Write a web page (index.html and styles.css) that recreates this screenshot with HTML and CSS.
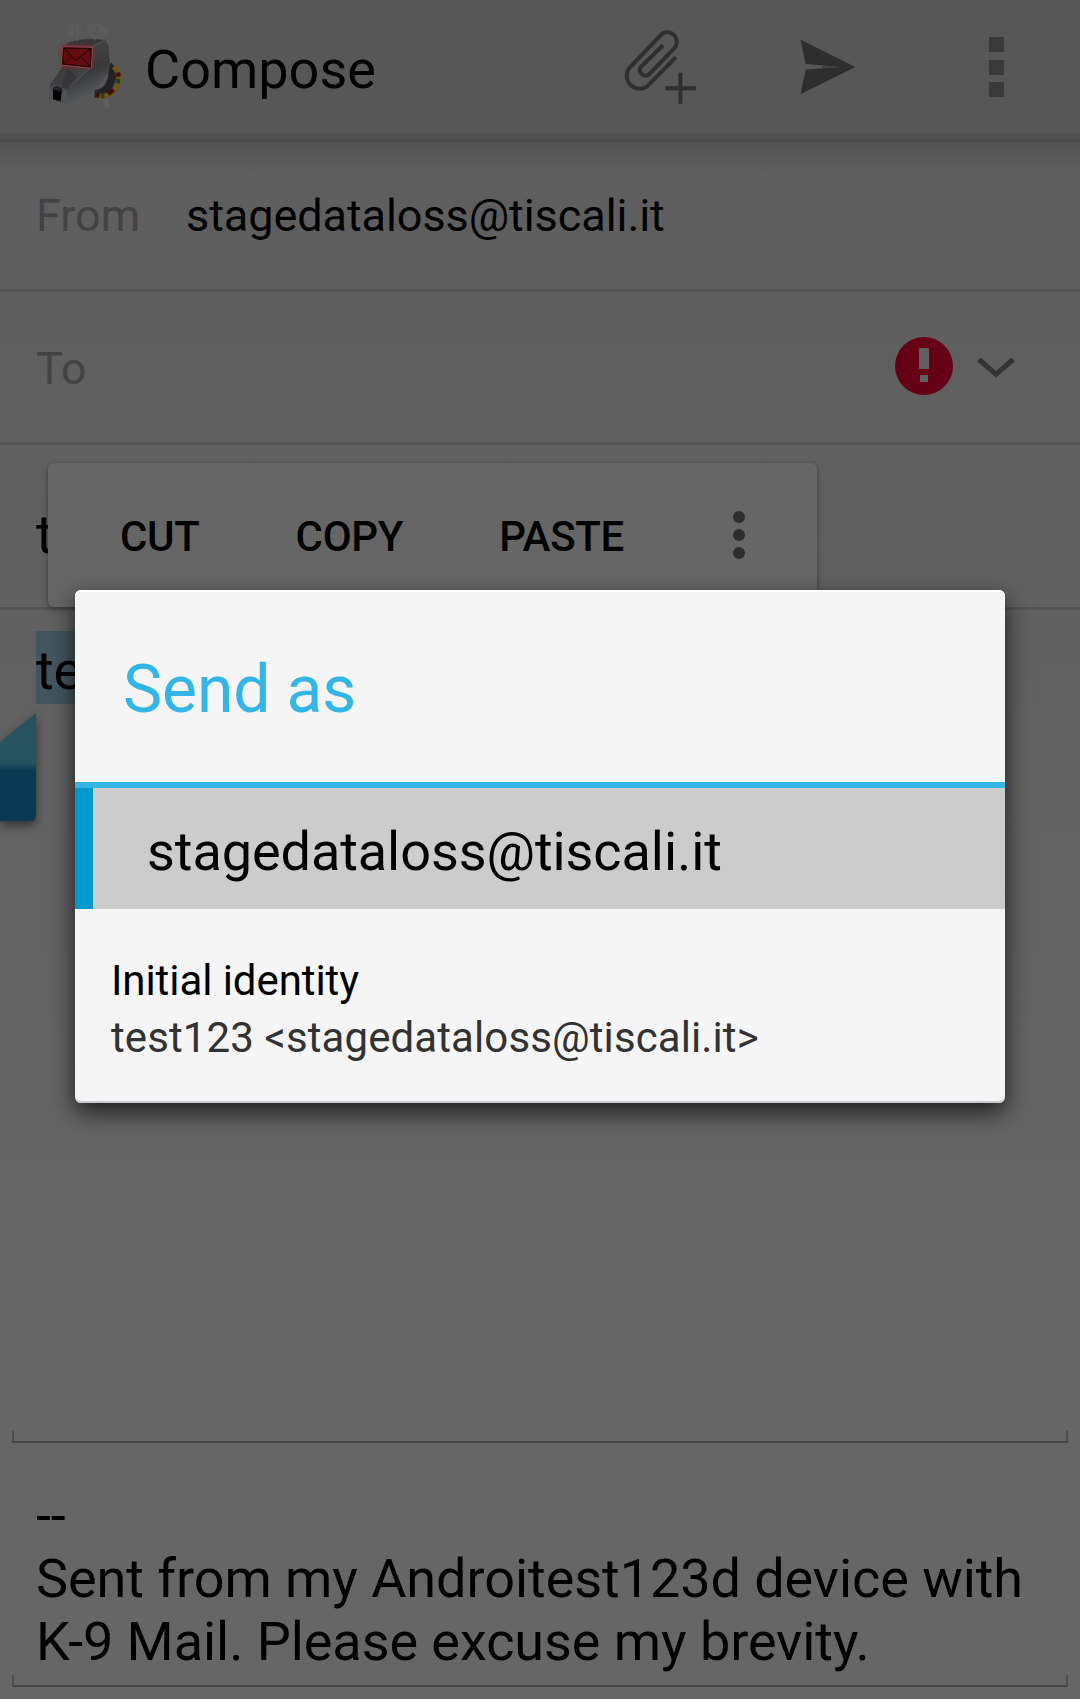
FILE: index.html
```html
<!DOCTYPE html>
<html lang="en">
<head>
<meta charset="utf-8">
<title>Compose</title>
<link rel="stylesheet" href="styles.css">
</head>
<body>
<main class="screen">
  <header class="bar">
    <svg class="logo" viewBox="0 0 270 300" aria-hidden="true">
      <defs>
        <linearGradient id="side" x1="0" y1="0" x2="1" y2="1">
          <stop offset="0" stop-color="#4a4a4b"/><stop offset=".45" stop-color="#363638"/><stop offset="1" stop-color="#404042"/>
        </linearGradient>
        <linearGradient id="snout" x1="0" y1="0" x2="1" y2="1">
          <stop offset="0" stop-color="#39393b"/><stop offset=".5" stop-color="#424244"/><stop offset="1" stop-color="#58595b"/>
        </linearGradient>
        <linearGradient id="top" x1="0" y1="0" x2="0" y2="1">
          <stop offset="0" stop-color="#303032"/><stop offset="1" stop-color="#404042"/>
        </linearGradient>
        <linearGradient id="cheek" x1="0" y1="0" x2=".3" y2="1">
          <stop offset="0" stop-color="#48494b"/><stop offset=".6" stop-color="#38393b"/><stop offset="1" stop-color="#5a5c5e"/>
        </linearGradient>
        <filter id="glow" x="-30%" y="-40%" width="160%" height="180%"><feGaussianBlur stdDeviation="6"/></filter>
      </defs>
      <path d="M190 246l16 4 2 24-8 8-10-14z" fill="#5d5f60"/>
      <path d="M206 152c12 12 15 34 2 58-10 18-26 26-44 26" fill="none" stroke="#222224" stroke-width="24"/>
      <path d="M198 155c10 18 9 38-3 54-9 12-20 19-31 22" fill="none" stroke="#3a3b3d" stroke-width="2"/>
      <path d="M221 155c19 18 20 45 5 66-13 18-32 26-54 22" fill="none" stroke="#6f5519" stroke-width="15"/>
      <path d="M234 172l2 13M221 224L204 237M179 242l-9-1" fill="none" stroke="#4a0f0c" stroke-width="13"/>
      <path d="M235 192l-2 13M193 243l-10 1" fill="none" stroke="#1c4030" stroke-width="12"/>
      <path d="M70 92L88 81 138 71 196 74 205 92 209 150 207 168 112 268 70 264 29 248 32 207 72 150z" fill="url(#side)"/>
      <path d="M70 92L88 81Q135 66 196 74L158 95z" fill="url(#top)" stroke="#585859" stroke-width="2"/>
      <path d="M72 150L155 157 83 225 77 265 29 248 32 207z" fill="url(#snout)"/>
      <path d="M155 157L80 222 77 265 112 268Q170 226 207 168 212 110 196 74L158 95z" fill="url(#cheek)"/>
      <path d="M196 74L158 95 155 157 84 220" fill="none" stroke="#5e5f61" stroke-width="2"/>
      <path d="M82 160L64 218 84 222 110 187z" fill="#333335" opacity=".7"/>
      <path d="M29 248L32 217Q48 202 67 220L82 226 77 265z" fill="#515153"/>
      <path d="M39 221q10-16 27 3l-4 35-23-6z" fill="#000"/>
      <path d="M37 223q10-20 31 0l-1 7-28-6z" fill="#252527"/>
      <rect x="65" y="92" width="94" height="66" fill="#8b1b20" filter="url(#glow)" opacity=".75"/>
      <path d="M68 95L158 97 154 160 65 150z" fill="#640b0f" stroke="#8a4549" stroke-width="3"/>
      <path d="M71 99L106 136 154 101M68 147l28-23M152 155l-30-30M71 99l82 2-2 54-83-8z" fill="none" stroke="#190507" stroke-width="3"/>
      <g fill="#666768" fill-opacity=".3" stroke="#666768" stroke-opacity=".35" stroke-width="2">
        <path d="M93 27q-10 5-9 21 1 15 17 18 17 0 20-12l3-12q-2-15-15-15z"/>
        <path d="M151 27q-9 5-8 23 2 17 20 16l17 1q22-3 24-19-1-13-18-17-12-6-35-4z"/>
      </g>
      <path d="M102 37l8 30M172 37l-8 30" stroke="#4f4f51" stroke-width="2"/>
      <path d="M110 65l3 14M168 63l-5 15" stroke="#606163" stroke-width="3"/>
    </svg>
    <h1 class="bar-title">Compose</h1>
    <div class="bar-actions">
      <svg width="76" height="78" viewBox="0 0 76 78" fill="none" stroke="#2f2f2f" stroke-width="4" aria-label="Attach">
        <path d="M52.5 29.8L23.7 59A13 13 0 0 1 5.3 41.3L38.3 6.7A9.6 9.6 0 0 1 51.4 20.4L25.3 47.3A5.6 5.6 0 0 1 17.3 39.8L39.5 18" transform="translate(-.5 .3)"/>
        <path d="M41.3 61.2H72M56.4 45.7v31"/>
      </svg>
      <svg class="send" width="56" height="56" viewBox="0 0 56 56" fill="#2e2e2e" aria-label="Send">
        <path d="M.5.7L55.4 28 .5 55.3 5.7 30.4 40 28 5.7 25z"/>
        <path d="M22 26.4L40 28 22 29z" fill="#424242"/>
      </svg>
      <div class="squares"><i></i><i></i><i></i></div>
    </div>
  </header>

  <section class="row row-from">
    <span class="label">From</span>
    <span class="value">stagedataloss@tiscali.it</span>
  </section>
  <section class="row row-to">
    <span class="label">To</span>
    <svg class="status" width="58" height="58" viewBox="0 0 58 58" aria-hidden="true">
      <path fill="#660014" fill-rule="evenodd" d="M29 0a29 29 0 1 1 0 58 29 29 0 0 1 0-58zM24 11v21h10V11zM25 38v7h8v-7z"/>
    </svg>
    <svg class="chevron" width="38" height="22" viewBox="0 0 38 22" fill="none" stroke="#333" stroke-width="5" aria-hidden="true">
      <path d="M2 2.5L19 17.3 36 2.5"/>
    </svg>
  </section>
  <section class="row row-subject">
    <span class="big">t</span>
  </section>
  <section class="body field">
    <span class="big selected">te</span>
  </section>
  <section class="signature field">
    <p class="big">--<br>Sent from my Androitest123d device with<br>K-9 Mail. Please excuse my brevity.</p>
  </section>

  <svg class="handle" width="60" height="130" viewBox="0 0 60 130" aria-hidden="true">
    <defs>
      <linearGradient id="grip" gradientUnits="userSpaceOnUse" x1="0" y1="0" x2="0" y2="108">
        <stop offset=".46" stop-color="#27525f"/><stop offset=".53" stop-color="#0b3953"/>
      </linearGradient>
    </defs>
    <path d="M-20 46L36 0V103q0 5-5 5H-20z" fill="url(#grip)"/>
  </svg>

  <nav class="popup">
    <span>CUT</span><span>COPY</span><span>PASTE</span>
    <div class="dots"><i></i><i></i><i></i></div>
  </nav>

  <div class="dialog" role="dialog">
    <h2 class="dialog-title">Send as</h2>
    <div class="account">stagedataloss@tiscali.it</div>
    <div class="identity">
      <div class="identity-name">Initial identity</div>
      <div class="identity-mail">test123 &lt;stagedataloss@tiscali.it&gt;</div>
    </div>
  </div>
</main>
</body>
</html>
```
FILE: styles.css
```css
* { box-sizing: border-box; }

body {
  margin: 0;
  font-family: Roboto, sans-serif;
  color: #000;
}

svg { display: block; flex: none; }

.screen {
  position: relative;
  display: flex;
  flex-direction: column;
  width: 1080px;
  height: 1699px;
  overflow: hidden;
  background: linear-gradient(#5d5d5d, #606060 27%, #666 85%);
}

.bar {
  display: flex;
  align-items: flex-start;
  height: 142px;
  padding-left: 40px;
  background: linear-gradient(#575757 133px, #505050 133px, #505050 139px, #4c4c4c 139px);
}
.logo { width: 90px; height: 100px; margin-top: 15px; }
.bar-title {
  margin: 38px 0 0 15px;
  font-size: 54px;
  font-weight: 400;
}
.bar-actions {
  display: flex;
  margin-left: auto;
  padding: 27px 76px 0 0;
}
.send { margin: 12px 133px 0 100px; }
.squares {
  display: grid;
  gap: 7.5px;
  align-content: start;
  padding-top: 10px;
}
.squares i { width: 15px; height: 15px; background: #3a3a3a; }

.row {
  display: flex;
  align-items: flex-start;
  padding-left: 36px;
  border-bottom: 3px solid #545454;
  font-size: 45px;
}
.label { color: #434343; }
.value { letter-spacing: -.07px; }
.row-from {
  height: 150px;
  padding-top: 47px;
  background: linear-gradient(rgba(0, 0, 0, .11), transparent 32px);
}
.row-from .label { width: 150px; }
.row-to { height: 153px; padding-top: 50px; }
.status { margin: -5px 0 0 auto; }
.chevron { margin: 15px 65px 0 24.4px; }
.row-subject { height: 165px; padding-top: 58px; }

.big { font-size: 54px; line-height: 63px; letter-spacing: -.06px; }

/* Holo text field: an underline with short ticks at each end */
.field {
  margin: 0 12px;
  padding-left: 24px;
  background:
    linear-gradient(#464646, #464646) bottom / 100% 2px no-repeat,
    linear-gradient(#4d4d4d, #4d4d4d) left bottom / 2px 12px no-repeat,
    linear-gradient(#4d4d4d, #4d4d4d) right bottom / 2px 12px no-repeat;
}
.body { height: 833px; padding-top: 21px; }
.selected {
  display: inline-block;
  height: 73px;
  padding-top: 8px;
  background: #42565f;
}
.signature { height: 244px; padding-top: 41px; }
.signature p { margin: 0; white-space: nowrap; }

.handle {
  position: absolute;
  left: 0;
  top: 713px;
  filter: drop-shadow(0 4px 5px rgba(0, 0, 0, .5));
}

.popup {
  position: absolute;
  left: 48px;
  top: 463px;
  display: flex;
  gap: 96px;
  width: 769px;
  height: 144px;
  padding: 49px 0 0 72px;
  border-radius: 6px;
  background: #666;
  box-shadow: 0 3px 6px rgba(0, 0, 0, .3), 0 0 2px rgba(0, 0, 0, .2);
  font-size: 42px;
  font-weight: 500;
  letter-spacing: -.3px;
}
.dots { display: grid; gap: 6px; align-content: start; margin: -1px 0 0 13px; }
.dots i { width: 12px; height: 12px; border-radius: 50%; background: #2e2e2e; }

.dialog {
  position: absolute;
  left: 75px;
  top: 590px;
  width: 930px;
  height: 513px;
  border-radius: 6px;
  background: #f5f5f5;
  box-shadow: 0 9px 24px rgba(0, 0, 0, .72), inset 0 2px #fff, inset 0 -2px #c8cacb;
}
.dialog-title {
  height: 198px;
  margin: 0;
  padding: 61px 0 0 48px;
  border-bottom: 6px solid #33b5e5;
  color: #33b5e5;
  font-size: 66px;
  font-weight: 400;
  letter-spacing: -.15px;
}
.account {
  height: 121px;
  padding: 32px 0 0 54px;
  border-left: 18px solid #09c;
  background: #ccc;
  font-size: 54px;
  letter-spacing: -.07px;
}
.identity { padding: 47px 0 0 36px; font-size: 42px; line-height: 49px; }
.identity-name { letter-spacing: -.07px; }
.identity-mail { margin-top: 8px; color: #323232; letter-spacing: .1px; }
```
